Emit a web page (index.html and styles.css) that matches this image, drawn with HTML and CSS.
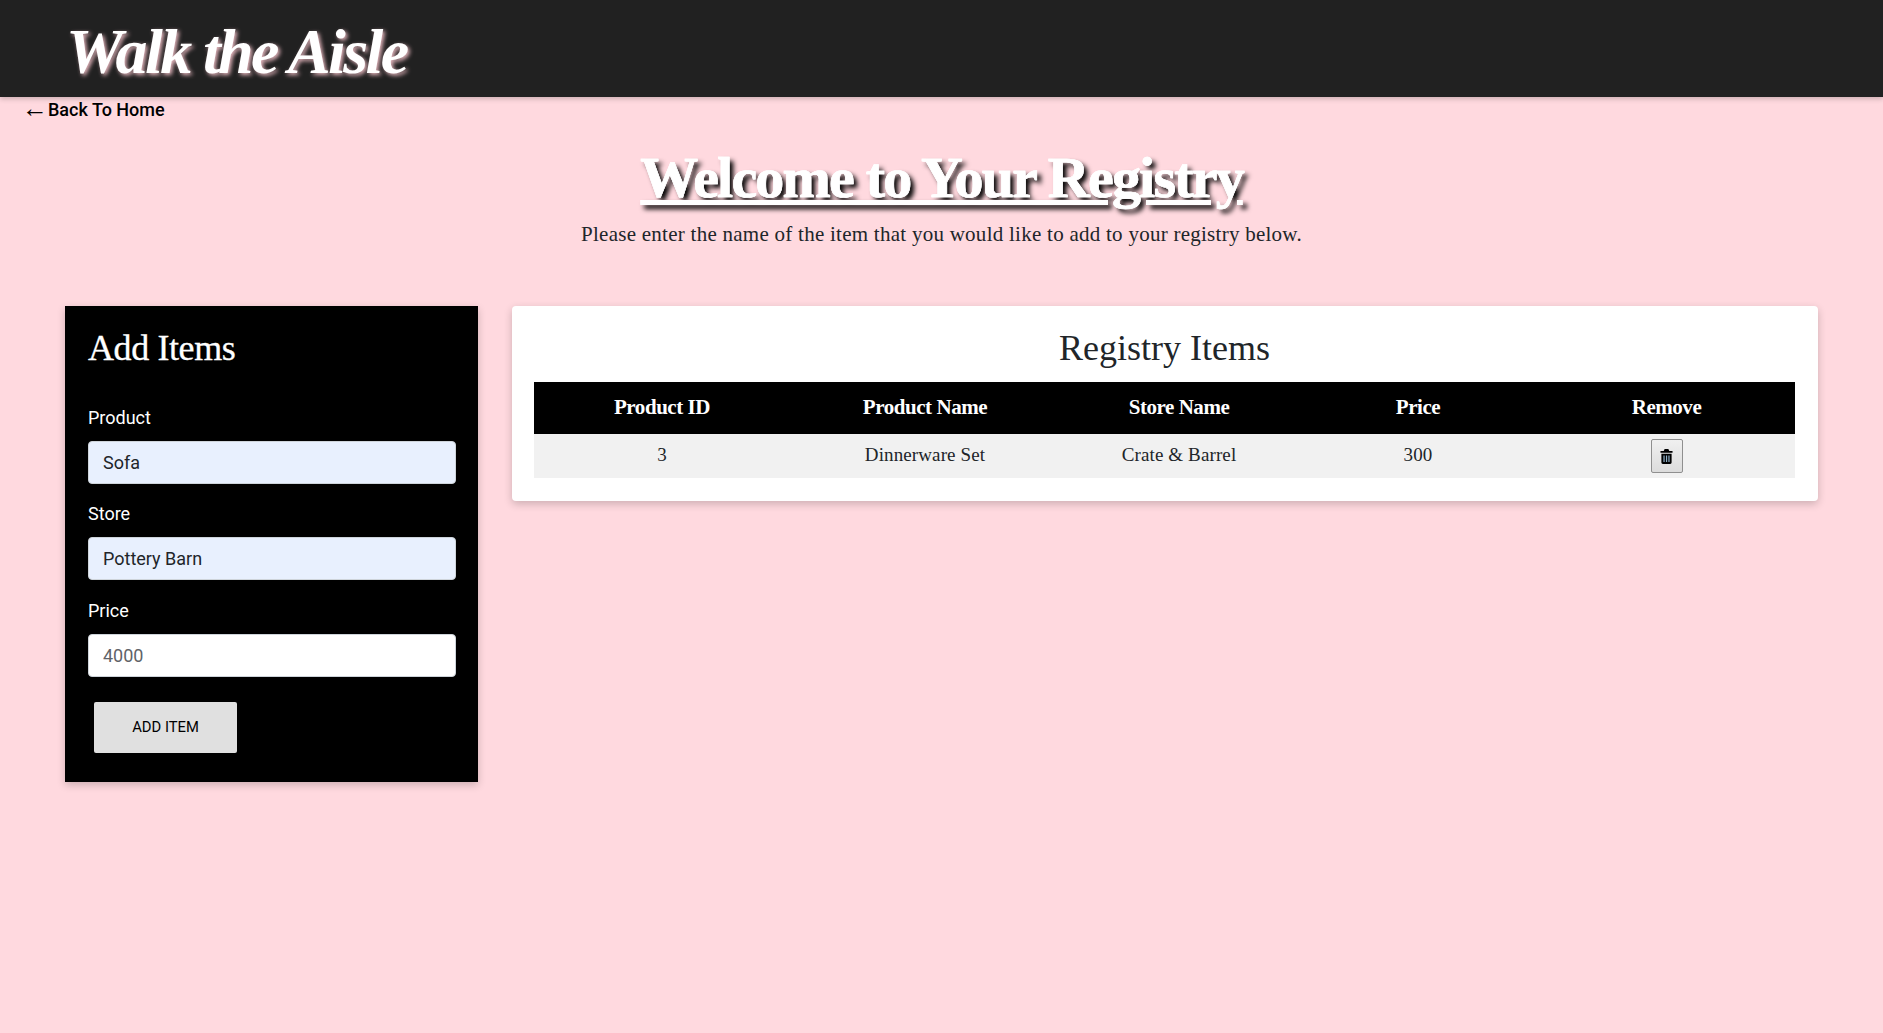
FILE: index.html
```html
<!DOCTYPE html>
<html lang="en">
<head>
<meta charset="utf-8">
<title>Walk the Aisle</title>
<link rel="stylesheet" href="styles.css">
</head>
<body>
<header class="topbar">
  <div class="brand">Walk the Aisle</div>
</header>
<a class="back" href="#"><span class="arrow">←</span> Back To Home</a>
<section class="intro">
  <h1 class="intro-title">Welcome to Your Registry</h1>
  <p class="intro-text">Please enter the name of the item that you would like to add to your registry below.</p>
</section>
<main class="panels">
  <form class="add-card">
    <h2 class="add-title">Add Items</h2>
    <label class="field-label" for="product">Product</label>
    <input class="field autofilled" id="product" type="text" value="Sofa">
    <label class="field-label" for="store">Store</label>
    <input class="field autofilled" id="store" type="text" value="Pottery Barn">
    <label class="field-label" for="price">Price</label>
    <input class="field" id="price" type="text" placeholder="4000">
    <button class="add-btn" type="button">ADD ITEM</button>
  </form>
  <section class="list-card">
    <h2 class="list-title">Registry Items</h2>
    <table class="items">
      <colgroup>
        <col class="c1"><col class="c2"><col class="c3"><col class="c4"><col class="c5">
      </colgroup>
      <thead>
        <tr><th>Product ID</th><th>Product Name</th><th>Store Name</th><th>Price</th><th>Remove</th></tr>
      </thead>
      <tbody>
        <tr>
          <td>3</td><td>Dinnerware Set</td><td>Crate &amp; Barrel</td><td>300</td>
          <td class="remove-cell">
            <button class="trash" type="button" aria-label="Remove">
              <svg viewBox="0 0 14 16" width="13" height="15" aria-hidden="true">
                <path fill="#000" d="M5 0h4l1 2h3.5v2H.5V2H4z"/>
                <path fill="#000" d="M1.5 5h11v9.5a1.5 1.5 0 0 1-1.5 1.5H3a1.5 1.5 0 0 1-1.5-1.5z"/>
                <path fill="#8fb0c8" d="M3.7 7h1.3v7H3.7zM6.4 7h1.3v7H6.4zM9 7h1.3v7H9z"/>
              </svg>
            </button>
          </td>
        </tr>
      </tbody>
    </table>
  </section>
</main>
</body>
</html>
```

FILE: styles.css
```css
* { box-sizing: border-box; }
html, body { margin: 0; padding: 0; }
body {
  min-height: 1033px;
  background: #ffd9df;
  font-family: Roboto, "Liberation Sans", sans-serif;
  color: #212529;
}
.topbar {
  height: 97px;
  background: #212121;
  padding: 14px 0 0 66px;
  box-shadow: 0 2px 5px rgba(0,0,0,.2);
}
.brand {
  font-family: "Liberation Serif", cursive;
  font-style: italic;
  font-weight: 700;
  font-size: 64px;
  line-height: 76px;
  letter-spacing: -2.6px;
  color: #fff;
  text-shadow: 2px 2px 4px #e8b9c0;
}
.back {
  display: flex;
  align-items: center;
  width: max-content;
  margin: 0 0 0 22px;
  height: 24px;
  font-size: 18px;
  font-weight: 500;
  color: #000;
  text-decoration: none;
}
.arrow {
  font-family: "Liberation Serif", serif;
  font-size: 26px;
  line-height: 24px;
}
.intro { text-align: center; }
.intro-title {
  margin: 24px 0 0;
  font-family: "Liberation Serif", serif;
  font-weight: 700;
  font-size: 58px;
  line-height: 66px;
  letter-spacing: -1.8px;
  color: #fff;
  text-decoration: underline;
  text-shadow: 4px 4px 5px #000;
  -webkit-text-stroke: .6px #fff;
}
.intro-text {
  margin: 9px 0 0;
  font-family: "Liberation Serif", serif;
  font-size: 21px;
  line-height: 28px;
  letter-spacing: .26px;
  color: #212529;
}
.panels {
  display: flex;
  align-items: flex-start;
  gap: 34px;
  margin: 58px 65px 0;
}
.add-card {
  flex: 0 0 413px;
  height: 476px;
  background: #000;
  padding: 22px 22px 0 23px;
  box-shadow: 0 3px 8px rgba(0,0,0,.2);
  display: flex;
  flex-direction: column;
}
.add-title {
  margin: 0 0 38px;
  font-family: "Liberation Serif", serif;
  font-weight: 400;
  font-size: 36px;
  line-height: 40px;
  letter-spacing: -.4px;
  color: #fff;
  -webkit-text-stroke: .3px #fff;
}
.field-label {
  display: block;
  height: 24px;
  line-height: 24px;
  margin-bottom: 11px;
  font-size: 18px;
  color: #fff;
}
.field {
  display: block;
  flex: none;
  width: 100%;
  height: 43px;
  padding: 0 14px;
  margin-bottom: 18.4px;
  border: 1px solid #ced4da;
  border-radius: 4px;
  font-family: inherit;
  font-size: 18px;
  color: #212529;
  background: #fff;
}
.field.autofilled { background: #e8f0fe; }
.field::placeholder { color: #5f6368; opacity: 1; }
.add-btn {
  width: 143px;
  height: 51px;
  margin: 6.8px 0 0 6px;
  padding-bottom: 2px;
  border: 0;
  border-radius: 2px;
  background: #e0e0e0;
  font-family: inherit;
  font-size: 14.8px;
  color: #000;
}
.list-card {
  flex: 1;
  height: 195px;
  background: #fff;
  border-radius: 4px;
  padding: 22px 23px 0 22px;
  box-shadow: 0 3px 8px rgba(0,0,0,.2);
}
.list-title {
  margin: 0 0 14px;
  text-align: center;
  font-family: "Liberation Serif", serif;
  font-weight: 400;
  font-size: 36px;
  line-height: 40px;
  color: #212529;
}
.items {
  width: 100%;
  table-layout: fixed;
  border-collapse: collapse;
  font-family: "Liberation Serif", serif;
}
.c1 { width: 256px; }
.c2 { width: 270px; }
.c3 { width: 238px; }
.c4 { width: 240px; }
.c5 { width: 257px; }
.items th {
  height: 52px;
  padding: 0 0 2px;
  background: #000;
  color: #fff;
  font-size: 21px;
  font-weight: 700;
  letter-spacing: -.45px;
}
.items td {
  height: 44px;
  padding: 0 0 2px;
  background: #f1f1f1;
  text-align: center;
  font-size: 19px;
  letter-spacing: .12px;
  color: #212529;
}
.items .remove-cell { padding: 0; }
.trash {
  display: inline-flex;
  align-items: center;
  justify-content: center;
  vertical-align: middle;
  width: 32px;
  height: 34px;
  padding: 0;
  border: 1px solid #8f8f8f;
  border-radius: 2px;
  background: linear-gradient(#f0f0f0, #dcdcdc);
}
```
